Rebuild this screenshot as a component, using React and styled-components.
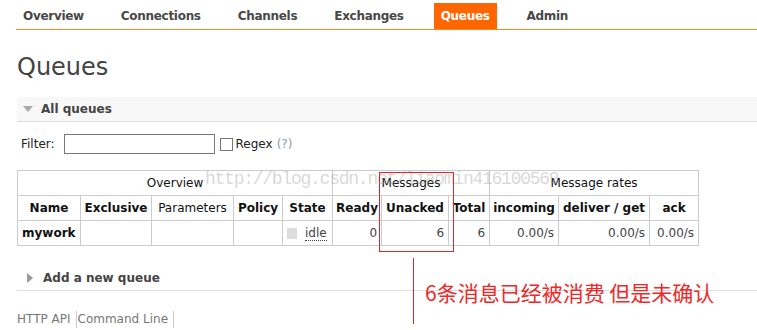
import React from 'react';
import styled, { createGlobalStyle } from 'styled-components';

const GlobalStyle = createGlobalStyle`
  html, body {
    margin: 0;
    padding: 0;
    background: #fff;
  }
  body {
    font-family: "DejaVu Sans", Verdana, sans-serif;
    font-size: 12px;
    color: #444;
  }
`;

const tabs = ['Overview', 'Connections', 'Channels', 'Exchanges', 'Queues', 'Admin'];

const columns = [
  { label: 'Name', width: 63 },
  { label: 'Exclusive', width: 71 },
  { label: 'Parameters', width: 82, light: true },
  { label: 'Policy', width: 49 },
  { label: 'State', width: 50 },
  { label: 'Ready', width: 49 },
  { label: 'Unacked', width: 67 },
  { label: 'Total', width: 41 },
  { label: 'incoming', width: 69 },
  { label: 'deliver / get', width: 91 },
  { label: 'ack', width: 49 },
];

export default function App() {
  return (
    <Page>
      <GlobalStyle />
      <Menu>
        {tabs.map((t) => (
          <Tab key={t} active={t === 'Queues'}>{t}</Tab>
        ))}
      </Menu>

      <Title>Queues</Title>

      <SectionHead open>
        <Arrow open />
        All queues
      </SectionHead>

      <FilterRow>
        <span>Filter:</span>
        <FilterInput type="text" />
        <Check />
        <span>Regex</span>
        <Help>(?)</Help>
      </FilterRow>

      <TableWrap>
        <Table>
          <colgroup>
            {columns.map((c) => (
              <col key={c.label} style={{ width: c.width }} />
            ))}
          </colgroup>
          <thead>
            <tr>
              <GroupTh colSpan={5}>Overview</GroupTh>
              <GroupTh colSpan={3}>Messages</GroupTh>
              <GroupTh colSpan={3}>Message rates</GroupTh>
            </tr>
            <tr>
              {columns.map((c) => (
                <Th key={c.label} light={c.light}>{c.label}</Th>
              ))}
            </tr>
          </thead>
          <tbody>
            <tr>
              <NameTd>mywork</NameTd>
              <Td />
              <Td />
              <Td />
              <StateTd>
                <StateBox />
                <Idle>idle</Idle>
              </StateTd>
              <NumTd>0</NumTd>
              <NumTd>6</NumTd>
              <NumTd>6</NumTd>
              <NumTd>0.00/s</NumTd>
              <NumTd>0.00/s</NumTd>
              <NumTd>0.00/s</NumTd>
            </tr>
          </tbody>
        </Table>
        <Watermark>http://blog.csdn.net/liaomin416100569</Watermark>
      </TableWrap>

      <SectionHead>
        <Arrow />
        Add a new queue
      </SectionHead>

      <Footer>
        <FooterLink>HTTP API</FooterLink>
        <FooterLink>Command Line</FooterLink>
      </Footer>

      <RedBox />
      <RedLine />
      <Note>6条消息已经被消费 但是未确认</Note>
    </Page>
  );
}

const Page = styled.div`
  position: relative;
  width: 757px;
  height: 330px;
  overflow: hidden;
  padding-left: 17px;
  box-sizing: border-box;
`;

const Menu = styled.div`
  display: flex;
  gap: 23px;
  padding-top: 3px;
  margin-left: -1px;
  border-bottom: 1px solid #f28a22;
`;

const Tab = styled.div`
  height: 26px;
  line-height: 26px;
  padding: 0 7px;
  font-weight: bold;
  letter-spacing: -0.3px;
  color: ${(p) => (p.active ? '#fff' : '#484848')};
  background: ${(p) => (p.active ? '#ff6600' : 'transparent')};
`;

const Title = styled.h1`
  margin: 23px 0 15px;
  font-size: 24px;
  line-height: 29px;
  font-weight: normal;
  color: #444;
`;

const SectionHead = styled.div`
  display: flex;
  align-items: center;
  gap: 8px;
  height: 24px;
  padding-left: ${(p) => (p.open ? '6px' : '10px')};
  margin-top: ${(p) => (p.open ? '0' : '20px')};
  background: ${(p) => (p.open ? '#f8f8f8' : '#fff')};
  border-bottom: 1px solid #ddd;
  font-weight: bold;
  color: #444;
`;

const Arrow = styled.span`
  width: 0;
  height: 0;
  margin-right: ${(p) => (p.open ? '0' : '2px')};
  border-style: solid;
  border-color: transparent;
  ${(p) =>
    p.open
      ? 'border-width: 6px 5px 0 5px; border-top-color: #aaa;'
      : 'border-width: 5px 0 5px 6px; border-left-color: #999;'}
`;

const FilterRow = styled.div`
  display: flex;
  align-items: center;
  margin: 12px 0 16px 4px;
  height: 20px;
  color: #222;
`;

const FilterInput = styled.input`
  width: 151px;
  height: 20px;
  box-sizing: border-box;
  margin: 0 5px 0 9px;
  border: 1px solid #777;
  padding: 0;
`;

const Check = styled.span`
  width: 13px;
  height: 13px;
  box-sizing: border-box;
  border: 1px solid #777;
  background: #fff;
  margin-right: 3px;
`;

const Help = styled.span`
  margin-left: 4px;
  color: #8a9cae;
`;

const TableWrap = styled.div`
  position: relative;
  width: 682px;
`;

const Table = styled.table`
  border-collapse: collapse;
  table-layout: fixed;
  width: 682px;
  color: #111;

  td, th {
    border: 1px solid #ccc;
    height: 25px;
    padding: 0 4px;
    box-sizing: border-box;
    white-space: nowrap;
    overflow: hidden;
  }
`;

const GroupTh = styled.th`
  font-weight: normal;
  text-align: center;
  color: #111;
`;

const Th = styled.th`
  font-weight: ${(p) => (p.light ? 'normal' : 'bold')};
  text-align: center;
  padding: 0 !important;
`;

const Td = styled.td``;

const NameTd = styled.td`
  font-weight: bold;
  text-align: left;
`;

const NumTd = styled.td`
  text-align: right;
  color: #444;
`;

const StateTd = styled.td`
  text-align: left;
`;

const StateBox = styled.span`
  display: inline-block;
  width: 10px;
  height: 11px;
  background: #ddd;
  vertical-align: middle;
  margin-right: 8px;
`;

const Idle = styled.span`
  color: #444;
  border-bottom: 1px dotted #444;
`;

const Watermark = styled.div`
  position: absolute;
  left: 188px;
  top: -1px;
  font-family: "Liberation Mono", monospace;
  font-size: 18px;
  letter-spacing: -1.25px;
  line-height: 20px;
  color: rgba(140, 140, 140, 0.35);
  pointer-events: none;
  white-space: nowrap;
`;

const Footer = styled.div`
  display: flex;
  align-items: center;
  margin-top: 20px;
  color: #777;
`;

const FooterLink = styled.span`
  padding: 0 5px 0 1px;
  line-height: 17px;
  border-right: 1px solid #ccc;

  &:first-child {
    padding-left: 0;
  }
`;

const RedBox = styled.div`
  position: absolute;
  left: 379px;
  top: 172px;
  width: 75px;
  height: 80px;
  box-sizing: border-box;
  border: 1px solid #e0242c;
`;

const RedLine = styled.div`
  position: absolute;
  left: 413px;
  top: 258px;
  width: 1px;
  height: 66px;
  background: #e0242c;
`;

const Note = styled.div`
  position: absolute;
  left: 425px;
  top: 278px;
  font-family: "Noto Sans CJK SC", sans-serif;
  font-size: 21px;
  line-height: 28px;
  color: #ec2a2a;
  white-space: nowrap;
`;
